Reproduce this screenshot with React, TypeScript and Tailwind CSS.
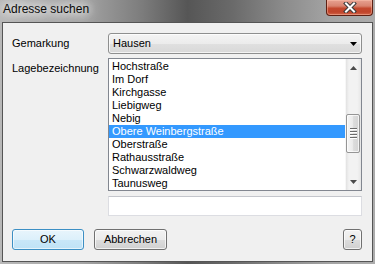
import React from "react";

const items = [
  "Hochstraße",
  "Im Dorf",
  "Kirchgasse",
  "Liebigweg",
  "Nebig",
  "Obere Weinbergstraße",
  "Oberstraße",
  "Rathausstraße",
  "Schwarzwaldweg",
  "Taunusweg",
];

function CloseX() {
  return (
    <svg width="14" height="11" viewBox="0 0 14 11">
      <path d="M3 1.5 L11 9.5 M11 1.5 L3 9.5" stroke="#3a3a3a" strokeWidth="4" strokeLinecap="square" fill="none" />
      <path d="M3 1.5 L11 9.5 M11 1.5 L3 9.5" stroke="#ffffff" strokeWidth="2" strokeLinecap="square" fill="none" />
    </svg>
  );
}

function Tri({ dir, color }: { dir: "up" | "down"; color: string }) {
  return (
    <svg width="7" height="4" viewBox="0 0 7 4">
      {dir === "up" ? (
        <path d="M3.5 0 L7 4 L0 4 Z" fill={color} />
      ) : (
        <path d="M0 0 L7 0 L3.5 4 Z" fill={color} />
      )}
    </svg>
  );
}

export default function App() {
  return (
    <div className="w-[375px] h-[264px] overflow-hidden flex flex-col bg-[linear-gradient(90deg,#b8b8b8_0%,#a4a4a4_22%,#7c7c7c_38%,#565656_50%,#6a6a6a_62%,#8c8c8c_76%,#a4a4a4_88%,#acacac_100%)] font-['Liberation_Sans',Arial,sans-serif] text-[11px] text-black">
      <div className="h-[22px] shrink-0 flex items-start">
        <div className="pl-[3px] pt-[2px] text-[12px] leading-[15px] text-[#0a0a0a] [text-shadow:0_0_8px_#ffffff,0_0_12px_#ffffff,0_0_16px_#ffffff]">
          Adresse suchen
        </div>
        <div className="ml-auto mr-[2px] w-[47px] h-[16px] rounded-b-[4px] border border-t-0 border-[#5e2013] bg-[linear-gradient(180deg,#e7a291_0%,#d98470_40%,#c4492f_55%,#c0442b_80%,#d2664a_100%)] shadow-[inset_0_0_0_1px_rgba(255,200,180,0.45)] flex items-center justify-center">
          <CloseX />
        </div>
      </div>
      <div className="mx-[2px] h-[240px] shrink-0 border border-[#555555] bg-[#f0f0f0] flex flex-col pl-[9px] pr-[10px] pt-[10px]">
        <div className="flex items-center h-[21px]">
          <div className="w-[96px] shrink-0 leading-[13px]">Gemarkung</div>
          <div className="flex-1 h-[21px] rounded-[3px] border border-[#8e8f8f] bg-[linear-gradient(180deg,#f4f4f4_0%,#ececec_50%,#e0e0e0_51%,#d8d8d8_100%)] shadow-[inset_0_0_0_1px_rgba(255,255,255,0.7)] flex items-center pl-[4px] pr-[4px]">
            <span className="flex-1 leading-[13px]">Hausen</span>
            <Tri dir="down" color="#000000" />
          </div>
        </div>
        <div className="flex mt-[4px]">
          <div className="w-[96px] shrink-0 pt-[4px] leading-[13px]">Lagebezeichnung</div>
          <div className="flex-1 h-[133px] border border-[#828790] bg-white flex">
            <div className="flex-1 flex flex-col pt-[1px] overflow-hidden">
              {items.map((it) => (
                <div
                  key={it}
                  className={
                    it === "Obere Weinbergstraße"
                      ? "h-[13px] shrink-0 leading-[13px] pl-[3px] bg-[#3399ff] text-white"
                      : "h-[13px] shrink-0 leading-[13px] pl-[3px]"
                  }
                >
                  {it}
                </div>
              ))}
            </div>
            <div className="w-[16px] shrink-0 flex flex-col bg-[linear-gradient(90deg,#e2e2e2_0%,#f2f2f2_20%,#f2f2f2_75%,#e6e6e6_100%)] border-l border-[#f7f7f7]">
              <div className="h-[17px] shrink-0 flex items-center justify-center pt-[1px]">
                <Tri dir="up" color="#4a4a4a" />
              </div>
              <div className="flex-1 pt-[38px] pl-[0px]">
                <div className="w-[14px] h-[39px] rounded-[2px] border border-[#959595] bg-[linear-gradient(90deg,#f5f5f5_0%,#ececec_45%,#dcdcdc_55%,#d4d4d4_100%)] shadow-[inset_0_0_0_1px_rgba(255,255,255,0.7)] flex flex-col items-center justify-center gap-[1px]">
                  <div className="w-[7px] h-[2px] border-t border-[#6b6b6b] bg-white" />
                  <div className="w-[7px] h-[2px] border-t border-[#6b6b6b] bg-white" />
                  <div className="w-[7px] h-[2px] border-t border-[#6b6b6b] bg-white" />
                  <div className="w-[7px] h-[2px] border-t border-[#6b6b6b] bg-white" />
                </div>
              </div>
              <div className="h-[17px] shrink-0 flex items-center justify-center">
                <Tri dir="down" color="#4a4a4a" />
              </div>
            </div>
          </div>
        </div>
        <div className="flex mt-[5px]">
          <div className="w-[96px] shrink-0" />
          <div className="flex-1 h-[20px] bg-white border border-[#dcdde2] border-t-[#c4c6cc]" />
        </div>
        <div className="flex mt-[13px]">
          <div className="w-[72px] h-[21px] rounded-[3px] border border-[#3c8fc4] bg-[linear-gradient(180deg,#e8f5fc_0%,#dcf0fb_50%,#c9e7f8_51%,#bfe2f6_100%)] shadow-[inset_0_0_0_1px_rgba(255,255,255,0.6)] flex items-center justify-center leading-[13px]">
            OK
          </div>
          <div className="ml-[10px] w-[73px] h-[21px] rounded-[3px] border border-[#707070] bg-[linear-gradient(180deg,#f2f2f2_0%,#ebebeb_50%,#dddddd_51%,#d0d0d0_100%)] shadow-[inset_0_0_0_1px_rgba(255,255,255,0.7)] flex items-center justify-center leading-[13px]">
            Abbrechen
          </div>
          <div className="ml-auto w-[19px] h-[21px] rounded-[3px] border border-[#707070] bg-[linear-gradient(180deg,#f2f2f2_0%,#ebebeb_50%,#dddddd_51%,#d0d0d0_100%)] shadow-[inset_0_0_0_1px_rgba(255,255,255,0.7)] flex items-center justify-center leading-[13px]">
            ?
          </div>
        </div>
      </div>
    </div>
  );
}
